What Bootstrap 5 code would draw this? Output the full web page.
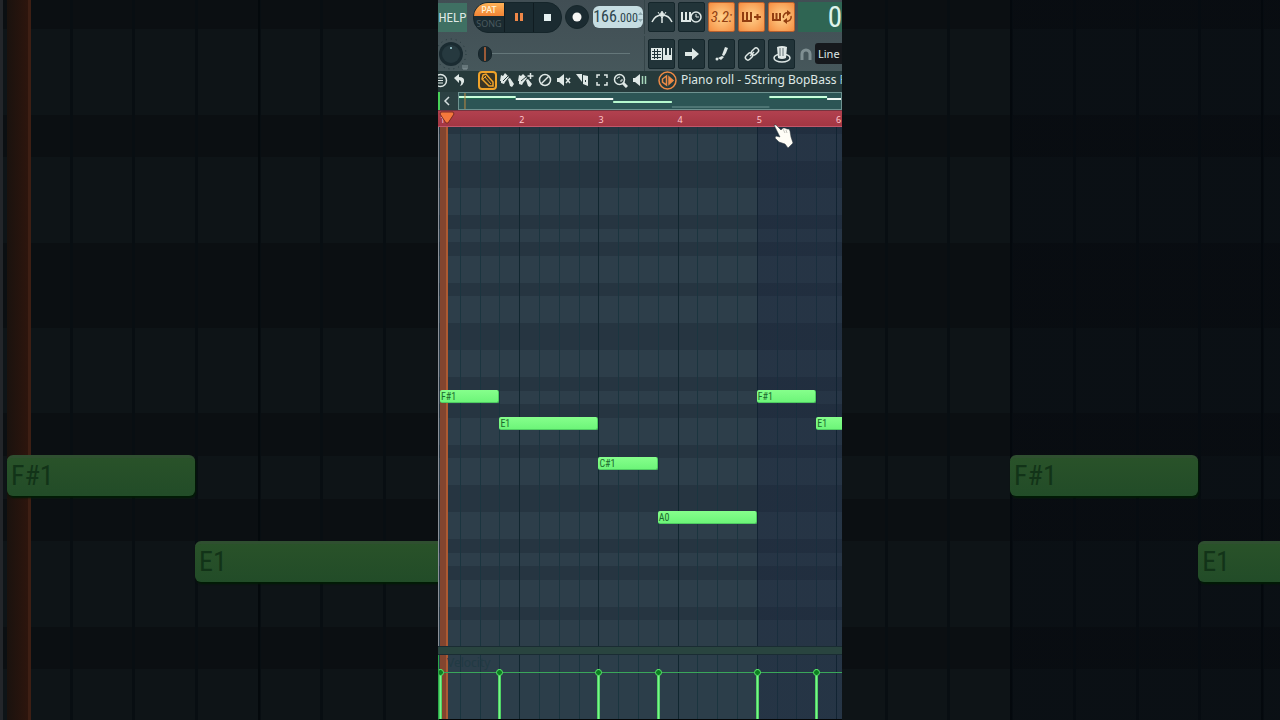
<!DOCTYPE html>
<html lang="en">
<head>
<meta charset="utf-8">
<meta name="viewport" content="width=device-width, initial-scale=1">
<title>Piano roll</title>
<link href="https://cdn.jsdelivr.net/npm/bootstrap@5.3.0/dist/css/bootstrap.min.css" rel="stylesheet">
<style>
  body { background: #0b1013; font-family: "Noto Sans", "Open Sans", sans-serif; }
  .screen { display: grid; grid-template-columns: 438fr 404fr 438fr; }
  .daw { grid-column: 2; background: #2c3d49; color: #dfe8e6; min-width: 0; }
  .daw button, .daw select { color: #dfe8e6; line-height: 1; }
  .daw svg { display: block; }
  .narrow { font-family: "Liberation Sans Narrow", "Roboto Condensed", "Open Sans Condensed", "Liberation Sans", sans-serif; }

  /* shared timeline: one beat is 4.925% of the stage */
  .stage { margin-left: 2px; }
  .roll-area .stage, .velocity .stage { margin-left: 1px; }
  .beats { background:
      linear-gradient(90deg, transparent 78.8%, #161f3a4d 78.8%),
      repeating-linear-gradient(90deg, #10262f 0 1px, transparent 1px 19.7%),
      repeating-linear-gradient(90deg, #1b353f 0 1px, transparent 1px 4.925%); }
  .keys { background: repeating-linear-gradient(#2d3e4a 0 27px, #263541 27px 41px, #2d3e4a 41px 54px, #263541 54px 68px,
      #2d3e4a 68px 95px, #263541 95px 108px, #2d3e4a 108px 135px, #263541 135px 162px) 0 61px / 100% 162px; }
  .note { position: absolute; left: calc(var(--at) * 4.925%); width: calc(var(--len) * 4.925%); top: var(--y);
      height: 13px; border-radius: 2px; background: linear-gradient(#86ff8c, #6df579); color: #1c6a2e;
      border: 1px solid #4fcb62; border-width: 0 1px 1px 0; font-size: 10px; line-height: 13px; padding-left: 1px; white-space: nowrap; }
  .playhead { position: absolute; left: 0; top: 0; bottom: 0; width: 8px; background: #82452f; border-right: 2px solid #ad5a32; }

  /* dim enlarged copy behind the window */
  .backdrop { position: absolute; inset: 0; overflow: hidden; border-left: 3px solid #23262a;
      background: repeating-linear-gradient(#0e1417 0 85px, #0b0f12 85px 128px, #0e1417 128px 171px, #0b0f12 171px 213px,
      #0e1417 213px 299px, #0b0f12 299px 341px, #0e1417 341px 427px, #0b0f12 427px 512px) 0 328px / 100% 512px; }
  .backdrop .stage { position: relative; height: 100%; margin-left: 4px; }
  .backdrop .beats { background:
      linear-gradient(90deg, transparent 78.8%, #04081055 78.8%),
      repeating-linear-gradient(90deg, #04090c 0 2px, transparent 2px 19.7%),
      repeating-linear-gradient(90deg, #080e12 0 3px, transparent 3px 4.925%); }
  .backdrop .note { height: 41px; border-radius: 6px; border: 0; border-top: 3px solid #2f4f30; background: linear-gradient(#295229, #224c28);
      box-shadow: 1px 2px 2px #001c04; color: #123318; font-size: 28px; line-height: 36px; padding-left: 4px; }
  .backdrop .playhead { width: 24px; background: linear-gradient(90deg, #1a120e, #2d150d); border-right: 3px solid #3e1f14; }

  /* transport */
  .panel-bg { background: linear-gradient(#414e54, #46575b); }
  .bar-row { height: 36px; padding-bottom: 2px; }
  .bar-row + .bar-row { height: 35px; padding-bottom: 0; }
  .left-pane { flex: 0 0 207px; border-right: 1px solid #344448; }
  .tile-row { gap: 3px; padding-left: 3px; }
  .help { width: 29px; height: 29px; background: #3f7063 !important; font-size: 13px; }
  .transport { width: 89px; height: 31px; border-radius: 15px; background: #1b2b31; border: 1px solid #15252a; overflow: hidden; margin: 0 3px 0 6px; }
  .transport button { background: none; border-left: 1px solid #101c21; }
  .mode { width: 30px; font-size: 9px; }
  .mode b { background: linear-gradient(#ffb256, #f18436); color: #fff4d8; height: 13px; line-height: 13px; font-weight: 500; }
  .mode span { color: #4a5a5f; line-height: 15px; }
  .rec { width: 24px; height: 24px; background: #1b2b31; border: 1px solid #17272b; }
  .tempo { width: 50px; height: 22px; border-radius: 6px; background: #c6dde2; color: #2d454d !important; font-size: 16px; }
  .tempo small { font-size: 12px; }
  .tile { width: 27px; height: 30px; background: #223439; border: 1px solid #15262b; border-radius: 2px; }
  .tile.lit { background: radial-gradient(#ffd18c, #f58d40); border-color: #b8602d; color: #913d10 !important; font-size: 15px; font-style: italic; }
  .time { height: 30px; background: #2f6553; font-size: 29px; line-height: 30px; color: #dff3ea; }
  .pitch { appearance: none; width: 160px; height: 16px; margin-left: 10px; background: linear-gradient(#65777a, #65777a) 8px 7px / 144px 1px no-repeat; }
  .pitch::-webkit-slider-thumb { appearance: none; width: 14px; height: 16px; border-radius: 7px; border: 1px solid #16252a;
      background: linear-gradient(90deg, #1b2b31 5px, #9a5a38 5px 7px, #1b2b31 7px); }
  .magnet { margin-left: 2px; }
  .snap { width: 60px; height: 21px; padding: 0 3px; background: #16191d; border-radius: 3px; font-size: 11px; appearance: none; }

  .tools { height: 21px; padding-bottom: 3px; background: #263a3b; }
  .tools button { width: 19px; height: 19px; flex: none; }
  .tools .first { margin-left: -7px; }
  .tools .group-end { margin-right: 9px; }
  .tools .title { font-size: 12px; line-height: 16px; margin-left: 4px; }
  .tools .title span { color: #8fc9dd; }
  .picked { border: 2px solid #f0a32a !important; border-radius: 4px; background: #3b3524 !important; }

  .overview { height: 18px; background: #2c4143; border-left: 2px solid #48d158; }
  .overview button { width: 18px; padding-right: 4px !important; }
  .overview .map { background: #2c5555; border: 1px solid #6e9290; min-width: 0; }
  .ruler { height: 17px; background: linear-gradient(#b2414f, #a33643); border-top: 1px solid #77333e; border-bottom: 1px solid #c2566a; font-size: 9px; line-height: 17px; }
  .ruler span { flex: 0 0 19.7%; color: #ffc6cb; }
  .marker { position: absolute; left: 0; top: 0; }
  .hand { position: absolute; left: 83%; top: 13px; z-index: 3; }

  .roll-area { flex: 1 1 518px; border-left: 1px solid #8b9199; background: #101a21; overflow: hidden; }
  .split { height: 9px; background: #29443f; border-top: 1px solid #1a2c33; border-bottom: 1px solid #1a2c33; }
  .velocity { height: 65px; background: #2c3e4a; overflow: hidden; border-left: 1px solid #2ba64a; border-bottom: 1px solid #050708; }
  .velocity h2 { font-size: 12px; line-height: 14px; color: #213a43; padding: 1px 0 0 7px; }
  .level { position: absolute; left: 0; right: 0; top: 17px; height: 1px; background: #3aa65a; }
  .stem { position: absolute; left: calc(var(--at) * 4.925%); top: 14px; bottom: 0; width: 7px; margin-left: -3px;
      background: linear-gradient(90deg, transparent 2px, #4fd365 2px 3px, #7cf58a 3px 4px, #4fd365 4px 5px, transparent 5px); }
  .stem::before { content: ""; display: block; width: 7px; height: 7px; border-radius: 50%; background: #0b7d20; border: 1px solid #57e36b; }
</style>
</head>
<body>
<div class="position-relative overflow-hidden">
  <div class="backdrop narrow" aria-hidden="true">
    <div class="stage beats">
      <div class="playhead"></div>
      <div class="note" style="--at:0;--len:3;--y:455px">F#1</div>
      <div class="note" style="--at:3;--len:5;--y:541px">E1</div>
      <div class="note" style="--at:16;--len:3;--y:455px">F#1</div>
      <div class="note" style="--at:19;--len:5;--y:541px">E1</div>
    </div>
  </div>

  <div class="screen min-vh-100 position-relative">
    <main class="daw d-flex flex-column overflow-hidden">
      <header class="panel-bg">
        <div class="bar-row d-flex">
          <div class="left-pane d-flex align-items-center">
            <button class="help btn p-0 border-0 rounded-0 narrow flex-shrink-0">HELP</button>
            <div class="transport d-flex flex-shrink-0">
              <button class="mode border-0 p-0 d-flex flex-column text-center"><b class="w-100">PAT</b><span class="w-100">SONG</span></button>
              <button class="flex-fill border-top-0 border-bottom-0 border-end-0 p-0" aria-label="Pause"><svg class="mx-auto" width="10" height="10"><path d="M1 1h3v8H1zM6 1h3v8H6z" fill="#ef8748"/></svg></button>
              <button class="flex-fill border-top-0 border-bottom-0 border-end-0 p-0" aria-label="Stop"><svg class="mx-auto" width="9" height="9"><rect x="1" y="1" width="7" height="7" fill="#e6f1f2"/></svg></button>
            </div>
            <button class="rec rounded-circle p-0 flex-shrink-0" aria-label="Record"><svg class="mx-auto" width="10" height="10"><circle cx="5" cy="5" r="4.500" fill="#f7f7f5"/></svg></button>
            <button class="tempo narrow border-0 p-0 ms-1 d-flex align-items-center justify-content-center flex-shrink-0"><span>166<small>.000</small></span>
              <svg width="5" height="12"><path d="M0 4l2.500-3 2.500 3zM0 8l2.500 3 2.500-3z" fill="#90a9af"/></svg></button>
          </div>
          <div class="tile-row d-flex flex-fill align-items-center overflow-hidden">
            <button class="tile p-0 flex-shrink-0" aria-label="Metronome"><svg class="mx-auto" width="22" height="18" fill="none" stroke="#dfe8e6" stroke-width="1.500"><path d="M1 14Q4 7 11 7t10 7M11 3v12"/><path d="M7 4l4 6 4-6"  stroke-width="1"/><circle cx="11" cy="6" r="2" fill="#dfe8e6" stroke="none"/></svg></button>
            <button class="tile p-0 flex-shrink-0" aria-label="Wait for input"><svg class="mx-auto" width="23" height="16" fill="none" stroke="#dfe8e6" stroke-width="2"><path d="M2 3v9h9M6 3v9M10 3v9"/><circle cx="16" cy="8" r="5" fill="#223439" stroke-width="1.500"/><path d="M16 5v3h3" stroke-width="1"/></svg></button>
            <button class="tile lit narrow p-0 flex-shrink-0 overflow-hidden">3.2:</button>
            <button class="tile lit p-0 flex-shrink-0" aria-label="Overdub"><svg class="mx-auto" width="22" height="16" fill="none" stroke="#913d10" stroke-width="2"><path d="M2 3v9h9M6 3v9M10 3v9M13 8h7M16.500 5v6"/></svg></button>
            <button class="tile lit p-0 flex-shrink-0" aria-label="Loop record"><svg class="mx-auto" width="22" height="16" fill="none" stroke="#913d10" stroke-width="1.500"><path d="M2 4v7h7M5.500 4v7M9 4v8" stroke-width="2"/><path d="M12.500 9a4 4 0 0 1 5-5M20 7a4 4 0 0 1-5 5"/><path d="M16 1l4 3-4 3zM16 9l-4 3 4 3z" fill="#913d10" stroke="none"/></svg></button>
            <output class="time narrow flex-fill text-end pe-0">0</output>
          </div>
        </div>
        <div class="bar-row d-flex">
          <div class="left-pane d-flex align-items-center">
            <button class="btn p-0 border-0 flex-shrink-0" aria-label="Main pitch"><svg width="30" height="34"><circle cx="13" cy="17" r="15" fill="none" stroke="#23363b" stroke-width="1" stroke-dasharray="1 4"/><circle cx="13" cy="17" r="12" fill="#1a2b31"/><circle cx="13" cy="17" r="9" fill="#26393f"/><circle cx="13" cy="11" r="1" fill="#a9dbe2"/><path d="M25 28v4h4v-4M27 28v4" stroke="#87979a" fill="none"/></svg></button>
            <input class="pitch border-0" type="range" min="0" max="100" value="0" aria-label="Song position">
          </div>
          <div class="tile-row d-flex flex-fill align-items-center overflow-hidden">
            <button class="tile p-0 flex-shrink-0" aria-label="Typing keyboard"><svg class="mx-auto" width="23" height="16"><path d="M1 2h11v12H1zM13 2h9v12h-9z" fill="#dfe8e6"/><path d="M2 5.500h9M2 8.500h9M2 11.500h9M4.500 3v10M7.500 3v10" stroke="#223439" stroke-width="1"/><path d="M15 2h2v7h-2zM19 2h2v7h-2z" fill="#223439"/></svg></button>
            <button class="tile p-0 flex-shrink-0" aria-label="Step forward"><svg class="mx-auto" width="16" height="14"><path d="M1 5h7V1l7 6-7 6V9H1z" fill="#dfe8e6"/></svg></button>
            <button class="tile p-0 flex-shrink-0" aria-label="Glide"><svg class="mx-auto" width="16" height="16"><path d="M11 1l3 1-2 5-2 3-2-1zM4 12l4-2 2 1-3 3z" fill="#dfe8e6"/><circle cx="3" cy="13" r="1.500" fill="#dfe8e6"/></svg></button>
            <button class="tile p-0 flex-shrink-0" aria-label="Link"><svg class="mx-auto" width="16" height="16" fill="none" stroke="#dfe8e6" stroke-width="1.500"><rect x="7" y="3" width="8" height="5" rx="2.500" transform="rotate(-45 11 5.500)"/><rect x="1" y="8" width="8" height="5" rx="2.500" transform="rotate(-45 5 10.500)"/><path d="M6 10l4-4"/></svg></button>
            <button class="tile p-0 flex-shrink-0" aria-label="Hat"><svg class="mx-auto" width="20" height="20"><ellipse cx="10" cy="14" rx="8" ry="4" fill="none" stroke="#dfe8e6" stroke-width="1.500"/><path d="M5 3q5-2 10 0l-1 11q-4 2-8 0z" fill="#dfe8e6"/><path d="M8 4v8M11 4v8" stroke="#607174"/></svg></button>
            <svg class="magnet flex-shrink-0" width="12" height="14"><path d="M2 13V7a4 4 0 0 1 8 0v6" fill="none" stroke="#7f8f92" stroke-width="3"/></svg>
            <select class="snap border-0 flex-shrink-0" aria-label="Snap"><option>Line</option></select>
          </div>
        </div>
      </header>

      <nav class="tools d-flex align-items-center">
        <button class="btn p-0 border-0 first" aria-label="Menu"><svg class="mx-auto" width="15" height="15" fill="none" stroke="#dfe8e6"><circle cx="7.500" cy="7.500" r="6" stroke-width="1.500"/><path d="M5 5h5M5 7.500h5M5 10h5"/></svg></button>
        <button class="btn p-0 border-0 group-end" aria-label="Undo"><svg class="mx-auto" width="13" height="14"><path d="M1 5l5-4v3q6 0 5 5-1 3-4 4 3-5-1-6v3z" fill="#dfe8e6"/></svg></button>
        <button class="btn p-0 picked" aria-label="Draw"><svg class="mx-auto" width="15" height="15" fill="none" stroke="#f0a32a"><path d="M3 2l3-1 7 8v4H9L2 6z" stroke-width="1.500"/><path d="M5 4l6 7M3 6l3-3"/></svg></button>
        <button class="btn p-0 border-0" aria-label="Paint"><svg class="mx-auto" width="16" height="16"><path d="M2 3l2 1 2-3 4 4-4 5-1 2-3-1V9H1zM9 7l2-1 4 6-2 3-2-1z" fill="#dfe8e6"/><path d="M4 9l5-5" stroke="#263a3b"/></svg></button>
        <button class="btn p-0 border-0" aria-label="Paint sequence"><svg class="mx-auto" width="16" height="16"><path d="M1 3l2 1 2-2 4 4-4 5-1 2-3-1V9H0zM8 8l2-1 4 5-2 3-2-1z" fill="#dfe8e6"/><path d="M3 9l5-4" stroke="#263a3b"/><path d="M12.500 1v6M9.500 4h6" stroke="#dfe8e6" stroke-width="1.500"/></svg></button>
        <button class="btn p-0 border-0" aria-label="Delete"><svg class="mx-auto" width="14" height="14" fill="none" stroke="#dfe8e6" stroke-width="1.500"><circle cx="7" cy="7" r="5.500"/><path d="M3.500 10.500l7-7"/></svg></button>
        <button class="btn p-0 border-0" aria-label="Mute"><svg class="mx-auto" width="15" height="14"><path d="M1 5h2l5-4v12L3 9H1z" fill="#dfe8e6"/><path d="M10 5l4 5M14 5l-4 5" stroke="#dfe8e6" stroke-width="1.500"/></svg></button>
        <button class="btn p-0 border-0" aria-label="Slice"><svg class="mx-auto" width="15" height="14"><path d="M1 1h6v8zM8 2l5 1v10l-5-2z" fill="#dfe8e6"/><path d="M10 7h1v2h-1z" fill="#263a3b"/></svg></button>
        <button class="btn p-0 border-0" aria-label="Select"><svg class="mx-auto" width="14" height="14" fill="none" stroke="#dfe8e6" stroke-width="1.500"><path d="M2 5V2h3M9 2h3v3M12 9v3H9M5 12H2V9"/></svg></button>
        <button class="btn p-0 border-0" aria-label="Zoom"><svg class="mx-auto" width="15" height="15" fill="none" stroke="#dfe8e6"><circle cx="6.500" cy="6.500" r="5" stroke-width="1.500"/><path d="M10 10l4 4" stroke-width="3"/><path d="M4 6q0-2 3-2M7 8h2V6"/></svg></button>
        <button class="btn p-0 border-0 group-end" aria-label="Playback"><svg class="mx-auto" width="15" height="14"><path d="M1 5h2l5-4v12L3 9H1z" fill="#dfe8e6"/><path d="M10.500 3v8M13.500 3v8" stroke="#a8d8bc" stroke-width="1.500"/></svg></button>
        <button class="btn p-0 border-0" aria-label="Channel"><svg class="mx-auto" width="19" height="19" fill="none" stroke="#ee8a45" stroke-width="1.500"><circle cx="9.500" cy="9.500" r="8.500"/><path d="M8.500 5v9l-4-3V8z"/><path d="M11 6l4 3.500-4 3.500z" fill="#ee8a45"/></svg></button>
        <div class="title text-nowrap">Piano roll - 5String BopBass <span>F</span></div>
      </nav>

      <div class="overview d-flex">
        <button class="btn p-0 border-0 rounded-0 flex-shrink-0" aria-label="Scroll left"><svg class="mx-auto" width="8" height="10" fill="none" stroke="#d5dfdf" stroke-width="1.500"><path d="M6 1L2 5l4 4"/></svg></button>
        <div class="map flex-fill">
          <svg width="100%" height="16" viewBox="0 0 384 16" preserveAspectRatio="none"><path d="M0 5h57" stroke="#10834b"/><path d="M312 5h58" stroke="#10834b"/><path d="M0 4h57M312 4h58" stroke="#c9ffdc" stroke-width="2"/><path d="M57 6h98M370 6h14" stroke="#f0f7f3" stroke-width="2"/><path d="M155 9h59" stroke="#b6f8ce" stroke-width="2"/><path d="M214 14h98" stroke="#6f9694"/><path d="M6 0v16" stroke="#c08a40"/></svg>
        </div>
      </div>

      <div class="ruler position-relative">
        <div class="stage d-flex overflow-hidden text-nowrap"><span>1</span><span>2</span><span>3</span><span>4</span><span>5</span><span>6</span></div>
        <svg class="marker" width="18" height="14"><path d="M3 1h12l1 2-6 9H8L2 3z" fill="#f5783c" stroke="#7c2c20"/></svg>
        <svg class="hand" width="20" height="25"><path d="M1 1l2 0 5 5 2-2 2 0 2 1 2 0 1 2 1 6 2 6-5 5-3-4-6-2-4-4 1-2 4 1z" fill="#fffdf6" stroke="#26323a" stroke-width=".5"/><path d="M10 5l2 4M13 6l1 3" stroke="#aaa9a5" stroke-width=".7"/></svg>
      </div>

      <section class="roll-area d-flex">
        <div class="keys flex-fill d-flex">
          <div class="stage beats position-relative flex-fill narrow">
            <div class="playhead"></div>
            <div class="note" style="--at:0;--len:3;--y:263px">F#1</div>
            <div class="note" style="--at:3;--len:5;--y:290px">E1</div>
            <div class="note" style="--at:8;--len:3;--y:330px">C#1</div>
            <div class="note" style="--at:11;--len:5;--y:384px">A0</div>
            <div class="note" style="--at:16;--len:3;--y:263px">F#1</div>
            <div class="note" style="--at:19;--len:5;--y:290px">E1</div>
          </div>
        </div>
      </section>
      <div class="split"></div>
      <section class="velocity">
        <div class="stage beats position-relative h-100">
          <div class="playhead"></div>
          <h2 class="m-0 fw-normal position-relative">Velocity</h2>
          <div class="level"></div>
          <div class="stem" style="--at:0"></div>
          <div class="stem" style="--at:3"></div>
          <div class="stem" style="--at:8"></div>
          <div class="stem" style="--at:11"></div>
          <div class="stem" style="--at:16"></div>
          <div class="stem" style="--at:19"></div>
        </div>
      </section>
    </main>
  </div>
</div>
<script src="https://cdn.jsdelivr.net/npm/bootstrap@5.3.0/dist/js/bootstrap.bundle.min.js"></script>
</body>
</html>
